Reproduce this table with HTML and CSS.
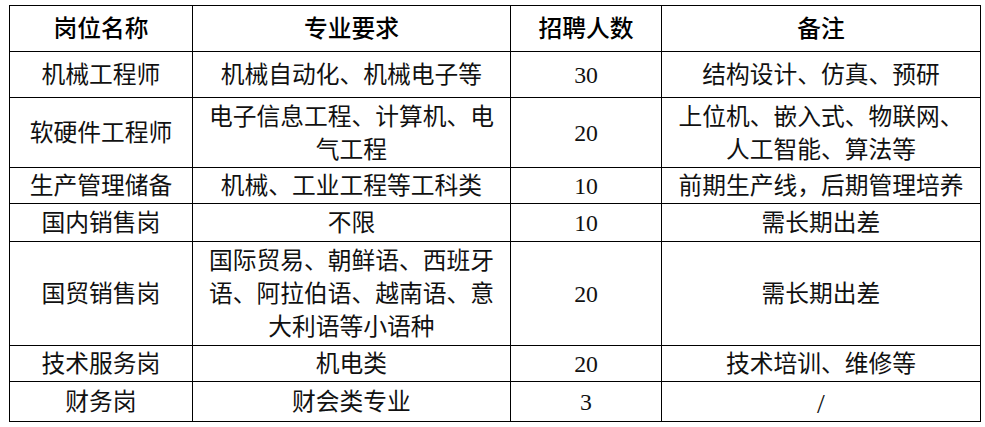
FILE: index.html
```html
<!DOCTYPE html>
<html lang="zh-CN">
<head>
<meta charset="utf-8">
<title>招聘岗位</title>
<link rel="stylesheet" href="styles.css">
</head>
<body>
<table class="jobs">
  <colgroup>
    <col class="c-name">
    <col class="c-major">
    <col class="c-count">
    <col class="c-note">
  </colgroup>
  <thead>
    <tr class="r-head">
      <th>岗位名称</th>
      <th>专业要求</th>
      <th>招聘人数</th>
      <th>备注</th>
    </tr>
  </thead>
  <tbody>
    <tr class="r-1">
      <td>机械工程师</td>
      <td>机械自动化、机械电子等</td>
      <td class="num">30</td>
      <td>结构设计、仿真、预研</td>
    </tr>
    <tr class="r-2">
      <td>软硬件工程师</td>
      <td>电子信息工程、计算机、电<br>气工程</td>
      <td class="num">20</td>
      <td>上位机、嵌入式、物联网、<br>人工智能、算法等</td>
    </tr>
    <tr class="r-3">
      <td>生产管理储备</td>
      <td>机械、工业工程等工科类</td>
      <td class="num">10</td>
      <td>前期生产线，后期管理培养</td>
    </tr>
    <tr class="r-4">
      <td>国内销售岗</td>
      <td>不限</td>
      <td class="num">10</td>
      <td>需长期出差</td>
    </tr>
    <tr class="r-5">
      <td>国贸销售岗</td>
      <td>国际贸易、朝鲜语、西班牙<br>语、阿拉伯语、越南语、意<br>大利语等小语种</td>
      <td class="num">20</td>
      <td>需长期出差</td>
    </tr>
    <tr class="r-6">
      <td>技术服务岗</td>
      <td>机电类</td>
      <td class="num">20</td>
      <td>技术培训、维修等</td>
    </tr>
    <tr class="r-7">
      <td>财务岗</td>
      <td>财会类专业</td>
      <td class="num">3</td>
      <td class="slash">/</td>
    </tr>
  </tbody>
</table>
</body>
</html>
```
FILE: styles.css
```css
html, body {
  margin: 0;
  padding: 0;
  background: #ffffff;
}

body {
  padding: 5px 0 0 9px;
}

.jobs {
  border-collapse: collapse;
  table-layout: fixed;
  width: 971px;
  font-family: "Liberation Serif", "Noto Sans CJK SC", serif;
  font-size: 23.75px;
  line-height: 33px;
  color: #111111;
}

.c-name { width: 183px; }
.c-major { width: 318px; }
.c-count { width: 151px; }
.c-note { width: 319px; }

.jobs th,
.jobs td {
  border: 1px solid #000000;
  padding: 2px 0 0 0;
  text-align: center;
  vertical-align: middle;
  white-space: nowrap;
}

.jobs th {
  font-weight: 500;
  color: #000000;
}

.jobs td {
  font-weight: 400;
}

.r-head { height: 46px; }
.r-1 { height: 46px; }
.r-2 { height: 70px; }
.r-3 { height: 36px; }
.r-4 { height: 38px; }
.r-5 { height: 104px; }
.r-6 { height: 35px; }
.r-7 { height: 40px; }

.num {
  font-family: "Liberation Serif", serif;
}

.jobs td.slash {
  font-family: "Liberation Serif", serif;
  font-size: 28px;
  line-height: 33px;
  padding-top: 4px;
}
```
